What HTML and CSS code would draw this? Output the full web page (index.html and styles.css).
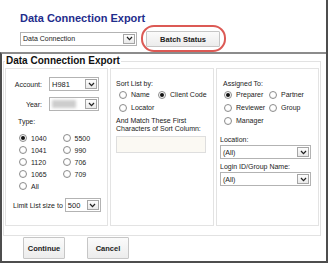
FILE: index.html
```html
<!DOCTYPE html>
<html lang="en">
<head>
<meta charset="utf-8">
<title>Data Connection Export</title>
<link rel="stylesheet" href="styles.css">
</head>
<body>
<div class="page">
  <header class="top">
    <h1 class="app-title">Data Connection Export</h1>
    <div class="toolbar">
      <div class="select select-top">
        <span class="select-text">Data Connection</span>
        <span class="select-arrow"><svg viewBox="0 0 8 6" width="7" height="5"><path d="M1 1.2 L4 4.4 L7 1.2" fill="none" stroke="#222" stroke-width="1.5"/></svg></span>
      </div>
      <div class="highlight"><button class="btn btn-batch">Batch Status</button></div>
    </div>
  </header>
  <section class="dialog">
    <fieldset class="panel">
      <legend class="panel-title">Data Connection Export</legend>
      <div class="columns">
        <div class="col col-filter">
          <div class="field-row row-account">
            <span class="field-label">Account:</span>
            <div class="select select-small">
              <span class="select-text text-strong">H981</span>
              <span class="select-arrow"><svg viewBox="0 0 8 6" width="7" height="5"><path d="M1 1.2 L4 4.4 L7 1.2" fill="none" stroke="#222" stroke-width="1.5"/></svg></span>
            </div>
          </div>
          <div class="field-row row-year">
            <span class="field-label">Year:</span>
            <div class="select select-small">
              <span class="select-text"><span class="blurred"></span></span>
              <span class="select-arrow"><svg viewBox="0 0 8 6" width="7" height="5"><path d="M1 1.2 L4 4.4 L7 1.2" fill="none" stroke="#222" stroke-width="1.5"/></svg></span>
            </div>
          </div>
          <div class="type-label">Type:</div>
          <div class="radio-grid grid-type">
            <label class="radio-item"><span class="radio checked"></span>1040</label>
            <label class="radio-item"><span class="radio"></span>5500</label>
            <label class="radio-item"><span class="radio"></span>1041</label>
            <label class="radio-item"><span class="radio"></span>990</label>
            <label class="radio-item"><span class="radio"></span>1120</label>
            <label class="radio-item"><span class="radio"></span>706</label>
            <label class="radio-item"><span class="radio"></span>1065</label>
            <label class="radio-item"><span class="radio"></span>709</label>
            <label class="radio-item"><span class="radio"></span>All</label>
          </div>
          <div class="field-row row-limit">
            <span class="limit-label">Limit List size to</span>
            <div class="select select-limit">
              <span class="select-text text-strong">500</span>
              <span class="select-arrow"><svg viewBox="0 0 8 6" width="7" height="5"><path d="M1 1.2 L4 4.4 L7 1.2" fill="none" stroke="#222" stroke-width="1.5"/></svg></span>
            </div>
          </div>
        </div>
        <div class="col col-sort">
          <div class="col-label">Sort List by:</div>
          <div class="radio-grid grid-sort">
            <label class="radio-item"><span class="radio"></span>Name</label>
            <label class="radio-item"><span class="radio checked"></span>Client Code</label>
            <label class="radio-item"><span class="radio"></span>Locator</label>
          </div>
          <div class="match-label">And Match These First<br>Characters of Sort Column:</div>
          <div class="text-input"></div>
        </div>
        <div class="col col-assign">
          <div class="col-label">Assigned To:</div>
          <div class="radio-grid grid-assign">
            <label class="radio-item"><span class="radio checked"></span>Preparer</label>
            <label class="radio-item"><span class="radio"></span>Partner</label>
            <label class="radio-item"><span class="radio"></span>Reviewer</label>
            <label class="radio-item"><span class="radio"></span>Group</label>
            <label class="radio-item"><span class="radio"></span>Manager</label>
          </div>
          <div class="sub-label label-location">Location:</div>
          <div class="select select-wide select-location">
            <span class="select-text">(All)</span>
            <span class="select-arrow"><svg viewBox="0 0 8 6" width="7" height="5"><path d="M1 1.2 L4 4.4 L7 1.2" fill="none" stroke="#222" stroke-width="1.5"/></svg></span>
          </div>
          <div class="sub-label label-login">Login ID/Group Name:</div>
          <div class="select select-wide select-login">
            <span class="select-text">(All)</span>
            <span class="select-arrow"><svg viewBox="0 0 8 6" width="7" height="5"><path d="M1 1.2 L4 4.4 L7 1.2" fill="none" stroke="#222" stroke-width="1.5"/></svg></span>
          </div>
        </div>
      </div>
    </fieldset>
    <div class="actions">
      <button class="btn btn-action">Continue</button>
      <button class="btn btn-action">Cancel</button>
    </div>
  </section>
</div>
</body>
</html>
```
FILE: styles.css
```css
* { box-sizing: border-box; }
html, body { margin: 0; padding: 0; background: #fff; }
body { font-family: "Liberation Sans", Arial, sans-serif; font-size: 7px; color: #222; }

.page {
  width: 328px;
  height: 263px;
  border-right: 2px solid #4d4d4d;
  display: flex;
  flex-direction: column;
}

.top {
  height: 52px;
  padding: 12px 0 0 20px;
}
.app-title {
  margin: 0;
  font-size: 11px;
  line-height: 12px;
  font-weight: bold;
  color: #1f2d8c;
}
.toolbar {
  display: flex;
  align-items: center;
  margin-top: 1px;
}

.select {
  display: flex;
  align-items: center;
  justify-content: space-between;
  height: 14px;
  border: 1px solid #b3b3b3;
  background: #fff;
}
.select-text {
  padding-left: 2px;
  font-size: 7px;
  line-height: 9px;
  color: #222;
}
.text-strong { font-size: 7.5px; }
.select-arrow {
  display: flex;
  align-items: center;
  justify-content: center;
  width: 12px;
  height: 10px;
  margin-right: 1px;
  border: 1px solid #a5a5a5;
  background: linear-gradient(#fdfdfd, #e9e9e9);
}
.select-arrow svg { display: block; }

.select-top { width: 117px; }
.highlight {
  margin-left: 4px;
  padding: 4px 4px 3px 3px;
  border: 2px solid #dc5a55;
  border-radius: 13px;
}
.btn {
  font-family: "Liberation Sans", Arial, sans-serif;
  font-weight: bold;
  color: #222;
  background: linear-gradient(#fbfbfb, #ececec);
  border: 1px solid #c6c6c6;
  border-radius: 1px;
  padding: 0;
}
.btn-batch {
  width: 74px;
  height: 16px;
  font-size: 7.5px;
}

.dialog {
  flex: 1;
  display: flex;
  flex-direction: column;
  border-top: 2px solid #8c8c8c;
  border-left: 2px solid #4d4d4d;
  border-bottom: 2px solid #4d4d4d;
}
.panel {
  margin: 0 5px 0 1px;
  padding: 0 1px 9px 1px;
  border: 1px solid #e2e2e2;
  min-inline-size: 0;
}
.panel-title {
  padding: 0 1px;
  font-size: 10px;
  line-height: 14px;
  font-weight: bold;
  color: #111;
}
.columns {
  display: grid;
  grid-template-columns: 103px 104px 103px;
  column-gap: 2px;
}
.col {
  height: 158px;
  border: 1px solid #e3e3e3;
}

.field-row { display: flex; align-items: center; }
.row-account { margin-top: 8px; }
.row-year { margin-top: 6px; }
.field-label {
  width: 36px;
  margin-right: 7px;
  text-align: right;
  line-height: 9px;
}
.select-small { width: 50px; }
.blurred {
  display: inline-block;
  width: 24px;
  height: 8px;
  margin-top: 1px;
  background: #cdcdcd;
  filter: blur(1.5px);
}
.type-label {
  margin-top: 6px;
  padding-left: 12px;
  line-height: 9px;
}
.radio-grid {
  display: grid;
  align-items: center;
}
.grid-type {
  margin-top: 6px;
  padding-left: 13px;
  grid-template-columns: 43.5px auto;
  grid-auto-rows: 12px;
}
.grid-sort {
  margin-top: 0;
  padding-left: 8px;
  grid-template-columns: 39px auto;
  grid-auto-rows: 13px;
}
.grid-assign {
  padding-left: 7px;
  grid-template-columns: 45px auto;
  grid-auto-rows: 13px;
}
.radio-item {
  display: flex;
  align-items: center;
  gap: 4px;
  line-height: 9px;
  white-space: nowrap;
}
.radio {
  flex: none;
  width: 8px;
  height: 8px;
  border-radius: 50%;
  border: 1px solid #8d8d8d;
  background: radial-gradient(circle at 50% 40%, #fff 40%, #ececec 100%);
  display: flex;
  align-items: center;
  justify-content: center;
}
.radio.checked::after {
  content: "";
  width: 4px;
  height: 4px;
  border-radius: 50%;
  background: #111;
}
.row-limit {
  margin-top: 6px;
  padding-left: 7px;
}
.limit-label {
  line-height: 9px;
  margin-right: 2px;
  white-space: nowrap;
}
.select-limit { width: 36px; }

.col-label {
  margin-top: 10px;
  padding-left: 5px;
  line-height: 9px;
}
.col-assign .col-label { padding-left: 6px; }
.match-label {
  margin-top: 3px;
  padding-left: 5px;
  line-height: 8px;
}
.text-input {
  width: 90px;
  height: 17px;
  margin: 3px 0 0 5px;
  border: 1px solid #dedede;
  background: #fbf9f3;
}
.sub-label {
  padding-left: 3px;
  line-height: 9px;
}
.label-location { margin-top: 8px; }
.label-login { margin-top: 3px; }
.select-wide.select-location,
.select-wide.select-login {
  width: 91px;
  margin-left: 3px;
}
.select-location { margin-top: 1px; }
.select-login { margin-top: 1px; }

.actions {
  display: flex;
  gap: 22px;
  padding: 1px 0 0 21px;
}
.btn-action {
  width: 42px;
  height: 22px;
  font-size: 7.5px;
}
```
